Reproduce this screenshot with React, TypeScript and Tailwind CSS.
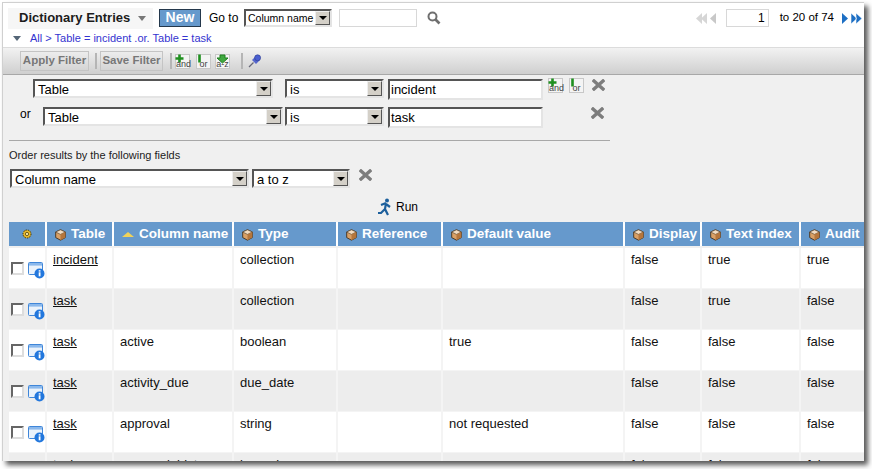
import React from "react";

const Cube = () => (
  <svg width="11" height="12" viewBox="0 0 11 12" className="shrink-0">
    <path d="M5.5 .8 10.3 3 10.3 8.6 5.5 11.2 .7 8.6 .7 3Z" fill="#d9a066" stroke="#4a3a28" strokeWidth="1" />
    <path d="M.7 3 5.5 5.4 10.3 3 5.5 .8Z" fill="#f4dcc0" stroke="#4a3a28" strokeWidth=".6" />
    <path d="M5.5 5.4V11.2L10.3 8.6V3Z" fill="#b5763c" />
  </svg>
);

const Cross = () => (
  <svg width="13" height="12" viewBox="0 0 13 12" className="shrink-0">
    <path d="M2 2 11 10M11 2 2 10" stroke="#7d7d7d" strokeWidth="3.4" strokeLinecap="square" />
  </svg>
);

const Sel = ({ label, w, cls = "" }: { label: string; w: string; cls?: string }) => (
  <div className={`${w} ${cls} h-[19px] flex border-2 border-t-[#555] border-l-[#555] border-r-[#e4e4e4] border-b-[#e4e4e4] bg-white shrink-0`}>
    <div className="flex-1 pl-[3px] text-[13px] leading-[17px] text-black overflow-hidden whitespace-nowrap">{label}</div>
    <div className="w-[15px] h-[15px] bg-[#d4d0c8] border border-t-[#eee] border-l-[#eee] border-r-[#555] border-b-[#555] flex items-center justify-center">
      <div className="w-0 h-0 border-x-[4px] border-x-transparent border-t-[4px] border-t-black" />
    </div>
  </div>
);

const TextBox = ({ value, w }: { value: string; w: string }) => (
  <div className={`${w} h-[21px] border-2 border-t-[#555] border-l-[#555] border-r-[#e4e4e4] border-b-[#e4e4e4] bg-white pl-[1px] text-[13px] leading-[17px] text-black shrink-0`}>{value}</div>
);

const Logic = ({ kind }: { kind: "and" | "or" | "az" }) => (
  <div className="relative w-[15px] h-[15px] bg-[#f4f4f4] border border-[#c8c8c8] shrink-0 overflow-visible">
    <svg width="15" height="15" viewBox="0 0 15 15" className="absolute -top-px -left-px">
      {kind === "and" && <path d="M4.5 .5V8.5M.5 4.5H8.5" stroke="#1f8f1f" strokeWidth="2.6" />}
      {kind === "or" && <path d="M3.5 .5V8.5" stroke="#1f8f1f" strokeWidth="2.6" />}
      {kind === "az" && <path d="M5 1H10V4H13L7.5 9 2 4H5Z" fill="#3fa83f" stroke="#1f7f1f" />}
    </svg>
    <span className="absolute left-0 right-0 bottom-0 text-center text-[9px] leading-[8px] text-[#444]">
      {kind === "and" ? "and" : kind === "or" ? "or" : "a-z"}
    </span>
  </div>
);

const Sep = () => <div className="w-[2px] h-[16px] bg-[#b5b5b5] shrink-0" />;

const ToolBtn = ({ label, w }: { label: string; w: string }) => (
  <div className={`${w} h-[20px] border border-[#c4c4c4] flex items-center justify-center text-[11.5px] font-bold text-[#777] shrink-0`}>{label}</div>
);

const Dbl = ({ color, dir }: { color: string; dir: "l" | "r" }) => (
  <svg width="20" height="11" viewBox="0 0 20 11" className="shrink-0">
    {dir === "l" ? (
      <>
        <path d="M6 0 0 5.5 6 11Z M11 0 5 5.5 11 11Z" fill={color} opacity=".75" />
        <path d="M20 0 14 5.5 20 11Z" fill={color} />
      </>
    ) : (
      <>
        <path d="M0 0 6 5.5 0 11Z" fill={color} />
        <path d="M9 0 15 5.5 9 11Z M14 0 20 5.5 14 11Z" fill={color} stroke="#fff" strokeWidth=".6" />
      </>
    )}
  </svg>
);

const InfoIcon = () => (
  <svg width="17" height="17" viewBox="0 0 17 17" className="shrink-0">
    <rect x=".5" y=".5" width="14" height="12" rx="1" fill="#eaf2fb" stroke="#3f86d9" />
    <rect x="1" y="1" width="13" height="2.6" fill="#8ab8ec" />
    <circle cx="11.5" cy="11.5" r="5" fill="#2277dd" />
    <rect x="10.7" y="10.3" width="1.8" height="4" fill="#fff" />
    <rect x="10.7" y="8.2" width="1.8" height="1.4" fill="#fff" />
  </svg>
);

const cols = "grid grid-cols-[38px_67px_120px_104px_105px_182px_77px_99px_64px]";

const headers = ["Table", "Column name", "Type", "Reference", "Default value", "Display", "Text index", "Audit"];

const rows = [
  ["incident", "", "collection", "", "", "false", "true", "true"],
  ["task", "", "collection", "", "", "false", "true", "false"],
  ["task", "active", "boolean", "", "true", "false", "false", "false"],
  ["task", "activity_due", "due_date", "", "", "false", "false", "false"],
  ["task", "approval", "string", "", "not requested", "false", "false", "false"],
  ["task", "approval_history", "journal", "", "", "false", "false", "false"],
];

export default function App() {
  return (
    <div className="w-[872px] h-[469px] bg-white overflow-hidden pt-[2px] pl-[2px] font-['Liberation_Sans',Arial,sans-serif] text-black">
      <div className="w-[862px] h-[459px] bg-white overflow-hidden border-l border-t border-[#d0d0d0] shadow-[4px_4px_5px_rgba(0,0,0,0.65)] flex flex-col">
        {/* Header */}
        <div className="h-[44px] shrink-0 bg-white">
          <div className="flex items-center h-[26px] pl-[5px] pt-[4px]">
            <div className="w-[145px] h-[21px] bg-[#f6f6f6] flex items-center pl-[11px] gap-[8px] shrink-0">
              <span className="text-[13px] font-bold text-[#1c1c1c] whitespace-nowrap">Dictionary Entries</span>
              <div className="w-0 h-0 border-x-[4px] border-x-transparent border-t-[5px] border-t-[#777]" />
            </div>
            <div className="ml-[6px] w-[42px] h-[18px] bg-[#6699cc] border border-[#24384c] text-white text-[14px] font-bold leading-[15px] text-center shrink-0">New</div>
            <span className="ml-[8px] text-[12px] whitespace-nowrap w-[35px] shrink-0">Go to</span>
            <div className="h-[18px] w-[88px] flex border-2 border-t-[#555] border-l-[#555] border-r-[#e4e4e4] border-b-[#e4e4e4] bg-white shrink-0">
              <div className="flex-1 pl-[2px] text-[10.5px] leading-[14px] whitespace-nowrap overflow-hidden">Column name</div>
              <div className="w-[15px] h-[14px] bg-[#d4d0c8] border border-t-[#eee] border-l-[#eee] border-r-[#555] border-b-[#555] flex items-center justify-center">
                <div className="w-0 h-0 border-x-[4px] border-x-transparent border-t-[4px] border-t-black" />
              </div>
            </div>
            <div className="ml-[7px] w-[78px] h-[18px] border border-[#d8d8d8] shrink-0" />
            <svg width="14" height="14" viewBox="0 0 14 14" className="ml-[10px] shrink-0">
              <circle cx="5.5" cy="5.5" r="4" fill="none" stroke="#6f6f6f" strokeWidth="2" />
              <path d="M8.5 8.5 12.5 12.5" stroke="#6f6f6f" strokeWidth="2.6" />
            </svg>
            <div className="ml-auto flex items-center pr-[2px]">
              <Dbl color="#c8c8c8" dir="l" />
              <div className="ml-[10px] w-[43px] h-[18px] border border-[#d8d8d8] text-right pr-[3px] text-[12px] leading-[16px]">1</div>
              <span className="ml-[11px] text-[11.5px] whitespace-nowrap">to 20 of 74</span>
              <span className="ml-[8px]"><Dbl color="#1d6fc4" dir="r" /></span>
            </div>
          </div>
          <div className="flex items-center h-[16px] mt-[1px] pl-[10px]">
            <div className="w-0 h-0 border-x-[4px] border-x-transparent border-t-[5px] border-t-[#556677]" />
            <span className="ml-[9px] text-[11px] text-[#3434d0] whitespace-nowrap">All &gt; Table = incident .or. Table = task</span>
          </div>
        </div>

        {/* Toolbar */}
        <div className="h-[28px] shrink-0 border-t border-t-[#dcdcdc] border-b border-b-[#a8a8a8] bg-gradient-to-b from-[#f2f2f2] to-[#cfcfcf] flex items-center pl-[17px]">
          <ToolBtn label="Apply Filter" w="w-[69px]" />
          <span className="ml-[6px]"><Sep /></span>
          <span className="ml-[3px]"><ToolBtn label="Save Filter" w="w-[63px]" /></span>
          <span className="ml-[7px]"><Sep /></span>
          <span className="ml-[3px]"><Logic kind="and" /></span>
          <span className="ml-[6px]"><Logic kind="or" /></span>
          <span className="ml-[4px]"><Logic kind="az" /></span>
          <span className="ml-[11px]"><Sep /></span>
          <svg width="14" height="14" viewBox="0 0 14 14" className="ml-[5px] shrink-0">
            <path d="M1 13 5.5 8.5" stroke="#667" strokeWidth="1.3" />
            <path d="M4 6 8 2 12 6 8 10Z" fill="#5566cc" />
            <circle cx="9.6" cy="3.8" r="3" fill="#4a5fd0" stroke="#2c3a90" strokeWidth=".6" />
          </svg>
        </div>

        {/* Filter panel */}
        <div className="h-[147px] shrink-0 bg-[#f0f0f0] pl-[6px] pt-[4px]">
          <div className="flex h-[21px] items-start pl-[24px]">
            <Sel label="Table" w="w-[240px]" />
            <Sel label="is" w="w-[99px]" cls="ml-[12px]" />
            <span className="ml-[4px]"><TextBox value="incident" w="w-[155px]" /></span>
            <span className="ml-[5px] -mt-[1px]"><Logic kind="and" /></span>
            <span className="ml-[6px] -mt-[1px]"><Logic kind="or" /></span>
            <span className="ml-[8px]"><Cross /></span>
          </div>
          <div className="flex h-[21px] items-start mt-[7px]">
            <span className="ml-[11px] w-[23px] text-[12px] leading-[14px] shrink-0">or</span>
            <Sel label="Table" w="w-[240px]" />
            <Sel label="is" w="w-[99px]" cls="ml-[2px]" />
            <span className="ml-[4px]"><TextBox value="task" w="w-[155px]" /></span>
            <span className="ml-[48px]"><Cross /></span>
          </div>
          <div className="w-[601px] h-px bg-[#a8a8a8] mt-[12px]" />
          <div className="text-[11px] leading-[12px] mt-[8px] text-[#222]">Order results by the following fields</div>
          <div className="flex items-start mt-[8px] ml-[1px]">
            <Sel label="Column name" w="w-[239px]" />
            <Sel label="a to z" w="w-[98px]" cls="ml-[3px]" />
            <span className="ml-[9px]"><Cross /></span>
          </div>
          <div className="flex items-center mt-[10px] ml-[368px] gap-[4px]">
            <svg width="15" height="18" viewBox="0 0 15 18" className="shrink-0">
              <circle cx="10" cy="2.5" r="2" fill="#1c5f9c" />
              <path d="M9 5 4 7M9 5 8 11 11 17M8 11 4 15 1 15M9 6 13 9" stroke="#1c5f9c" strokeWidth="2.2" fill="none" />
            </svg>
            <span className="text-[12px] leading-[16px]">Run</span>
          </div>
        </div>

        {/* Table */}
        <div className="flex-1 min-h-0 overflow-hidden bg-[#f0f0f0] pl-[6px]">
          <div className={`${cols} h-[24px] bg-[#6699cc] w-[856px]`}>
            <div className="flex items-center justify-center border-r-[2px] border-white">
              <svg width="12" height="12" viewBox="0 0 12 12">
                <circle cx="6" cy="6" r="4" fill="#e8b92c" stroke="#3a2c00" strokeWidth="1" strokeDasharray="1.4 1" />
                <circle cx="6" cy="6" r="1.6" fill="#fff3b0" stroke="#3a2c00" strokeWidth=".7" />
              </svg>
            </div>
            {headers.map((h, i) => (
              <div key={h} className={`flex items-center pl-[8px] pt-[1px] gap-[5px] text-white font-bold text-[13.5px] whitespace-nowrap overflow-hidden ${i < 7 ? "border-r-[2px] border-white" : ""}`}>
                {i === 1 ? (
                  <div className="w-0 h-0 border-x-[6px] border-x-transparent border-b-[5px] border-b-[#f0d25a] shrink-0" />
                ) : (
                  <Cube />
                )}
                <span>{h}</span>
              </div>
            ))}
          </div>
          <div className="h-[2px]" />
          {rows.map((r, ri) => (
            <div key={ri} className={`${cols} h-[41px] w-[856px] text-[13px] text-[#111] border-b border-[#f4f4f4] ${ri % 2 === 0 ? "bg-white" : "bg-[#ededed]"}`}>
              <div className="flex items-start pl-[2px] pt-[14px] gap-[4px] border-r-[2px] border-[#f4f4f4]">
                <div className="w-[13px] h-[13px] bg-white border-2 border-t-[#666] border-l-[#666] border-r-[#ddd] border-b-[#ddd] shrink-0" />
                <InfoIcon />
              </div>
              {r.map((c, i) => (
                <div key={i} className={`pl-[6px] pt-[4px] leading-[16px] overflow-hidden whitespace-nowrap ${i < 7 ? "border-r-[2px] border-[#f4f4f4]" : ""}`}>
                  {i === 0 ? <span className="underline">{c}</span> : c}
                </div>
              ))}
            </div>
          ))}
        </div>
      </div>
    </div>
  );
}
